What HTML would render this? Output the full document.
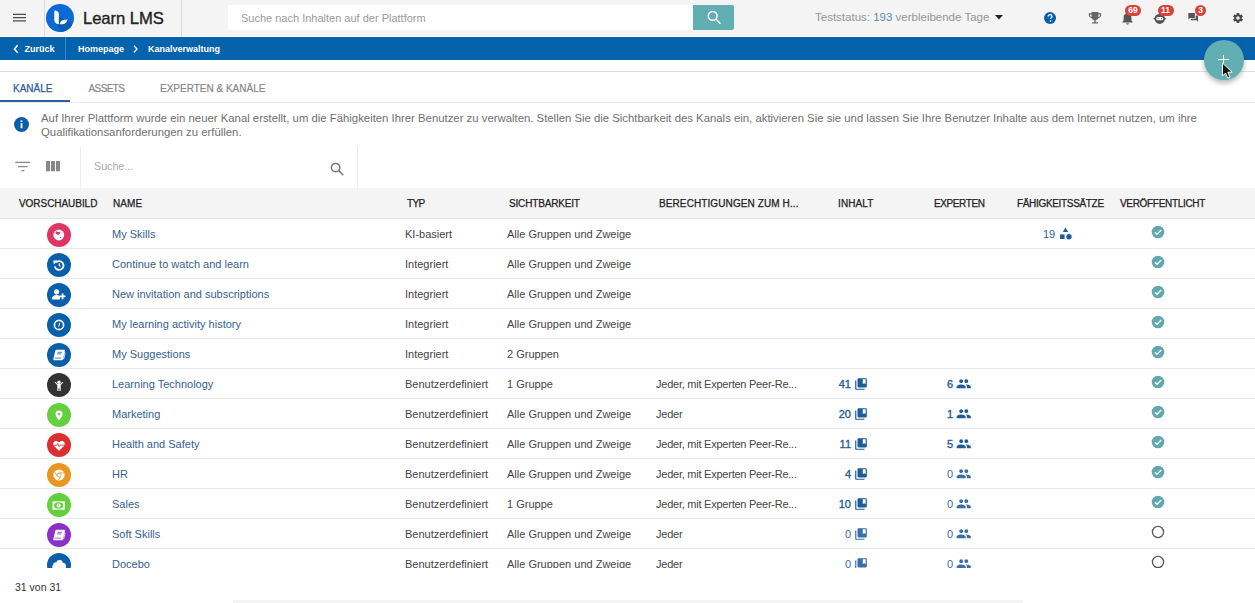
<!DOCTYPE html>
<html><head><meta charset="utf-8">
<style>
*{box-sizing:border-box;margin:0;padding:0}
html,body{width:1255px;height:603px;overflow:hidden;background:#fff;font-family:"Liberation Sans",sans-serif;position:relative}
.abs{position:absolute}
#hdr{position:absolute;left:0;top:0;width:1255px;height:36px;background:#f4f4f4}
#bc{position:absolute;left:0;top:37px;width:1255px;height:23px;background:#0563ad;color:#fff;font-weight:bold;font-size:9px}
.t{position:absolute;white-space:nowrap;line-height:1}
.hl{position:absolute;left:0;width:1255px;height:1px;background:#e6e6e6}
.th{position:absolute;top:199px;font-size:10px;font-weight:normal;color:#222;white-space:nowrap;line-height:1;letter-spacing:0.1px;-webkit-text-stroke:0.25px #222}
.row{position:absolute;left:0;width:1255px;height:30px;border-bottom:1px solid #e9e9e9}
.row .t{top:10.3px;font-size:11px;color:#444}
.row .nm{left:112px;color:#35628f}
.row .ty{left:405px}
.row .vi{left:507px}
.row .pe{left:656px;letter-spacing:-0.24px}
.row .num{top:10.3px;font-size:11px}
.row .b{-webkit-text-stroke:0.35px currentColor}
.badge{position:absolute;top:4.5px;height:11px;border-radius:6px;background:#d9413b;color:#fff;font-size:8.5px;font-weight:bold;text-align:center;line-height:11px}
.ic{position:absolute;left:46.5px;top:4px;width:24px;height:24px;border-radius:50%}
</style></head><body>
<div id="hdr">
  <svg class="abs" style="left:13px;top:12px" width="14" height="11" viewBox="0 0 14 11"><path d="M0 2.3h13M0 5.6h13M0 8.9h13" stroke="#4a4a4a" stroke-width="1.2"/></svg>
  <div class="abs" style="left:44px;top:0;width:1px;height:37px;background:#dcdcdc"></div>
  <div class="abs" style="left:181px;top:0;width:1px;height:37px;background:#dcdcdc"></div>
  <svg class="abs" style="left:45.5px;top:3.5px" width="28" height="28" viewBox="0 0 28 28"><defs><clipPath id="lc"><circle cx="14" cy="14" r="14"/></clipPath></defs><circle cx="14" cy="14" r="14" fill="#0b6ad5"/><path d="M10.5 20.3L12.8 12.5 21.6 16.3 34 28.7 22 40.7z" fill="#0a5db3" clip-path="url(#lc)"/><path d="M8.3 7.6c0-.8.5-1.2 1.3-1.1 1.9.3 3.2 1.7 3.2 3.7v10.1c-2.6-.2-4.5-1.9-4.5-4.4z" fill="#fff"/><path d="M13.6 20.3c.4-2.6 2.2-4.3 4.7-4.5l3.3-.3c-.4 2.7-2.3 4.5-4.8 4.7z" fill="#fff"/></svg>
  <div class="t" style="left:83px;top:10.5px;font-size:16.6px;color:#222;-webkit-text-stroke:0.35px #222;letter-spacing:-0.05px">Learn LMS</div>
  <div class="abs" style="left:228px;top:5px;width:465px;height:25px;background:#fff;border-radius:2px 0 0 2px"></div>
  <div class="t" style="left:241px;top:13px;font-size:11px;color:#9a9a9a">Suche nach Inhalten auf der Plattform</div>
  <div class="abs" style="left:693px;top:5px;width:41px;height:25px;background:#62afb3;border-radius:0 2px 2px 0"></div>
  <svg class="abs" style="left:704px;top:8px" width="20" height="20" viewBox="0 0 20 20"><circle cx="8.7" cy="7.9" r="4.4" stroke="#fff" stroke-width="1.5" fill="none"/><path d="M11.8 11l4.6 4.7" stroke="#fff" stroke-width="1.6"/></svg>
  <svg class="abs" style="left:995px;top:15px" width="8" height="5" viewBox="0 0 8 5"><path d="M0 0h8L4 4.5z" fill="#222"/></svg>
  <svg class="abs" style="left:1043.5px;top:11.5px" width="12" height="12" viewBox="0 0 12 12"><circle cx="6" cy="6" r="6" fill="#0b5ea8"/><path d="M4.2 4.6c0-1.1.8-1.9 1.9-1.9 1.1 0 1.9.7 1.9 1.7 0 1.3-1.5 1.4-1.5 2.6" stroke="#fff" stroke-width="1.3" fill="none"/><circle cx="6.5" cy="9.1" r=".8" fill="#fff"/></svg>
  <svg class="abs" style="left:1088px;top:12px" width="14" height="12" viewBox="0 0 14 12"><path d="M3.6 0h6.8v1.2h2.8v1.6c0 1.9-1.2 3.2-2.9 3.4-.6 1.2-1.6 1.9-2.6 2.1v1.9h2.4V11.6H4v-1.4h2.3V8.3C5.3 8.1 4.3 7.4 3.7 6.2 2 6 .8 4.7.8 2.8V1.2h2.8zM2 2.4v.5c0 1.1.6 1.9 1.6 2.1V2.4zm10 0h-1.6V5c1-.2 1.6-1 1.6-2.1z" fill="#666"/></svg>
  <svg class="abs" style="left:1121px;top:12px" width="13" height="13" viewBox="0 0 13 13"><path d="M6.5 12.5c.7 0 1.3-.6 1.3-1.3H5.2c0 .7.6 1.3 1.3 1.3zM10.4 8.6V5.4c0-2-1.1-3.6-2.9-4V.9C7.5.4 7 0 6.5 0S5.5.4 5.5.9v.5C3.6 1.8 2.6 3.4 2.6 5.4v3.2L1.3 9.9v.6h10.4v-.6z" fill="#555"/></svg>
  <svg class="abs" style="left:1153px;top:14.3px" width="13.5" height="10" viewBox="0 0 15 11"><path d="M7.5 0C4.4 0 2.2 1.9 1.8 4.2L0 5.2l1.8.9C2.2 8.8 4.4 11 7.5 11s5.3-2.2 5.7-4.9l1.8-.9-1.8-1C12.8 1.9 10.6 0 7.5 0z" fill="#555"/><rect x="3.6" y="3.3" width="7.8" height="3.6" rx="1.8" fill="#fff"/><circle cx="5.6" cy="5.1" r=".6" fill="#555"/><circle cx="9.4" cy="5.1" r=".6" fill="#555"/></svg>
  <svg class="abs" style="left:1187.5px;top:13px" width="10.5" height="9" viewBox="0 0 12 11"><path d="M0 0h8v6H2L0 8zM9 3h3v8l-2-2H3V7h6z" fill="#555"/></svg>
  <svg class="abs" style="left:1231.5px;top:11.5px" width="12" height="12" viewBox="0 0 24 24"><path d="M19.4 13c.04-.3.06-.6.06-1s-.02-.7-.06-1l2.1-1.65c.2-.15.24-.42.12-.64l-2-3.46c-.12-.22-.39-.3-.61-.22l-2.49 1c-.52-.4-1.08-.73-1.69-.98l-.38-2.65A.49.49 0 0 0 14 2h-4c-.25 0-.46.18-.49.42l-.38 2.65c-.61.25-1.17.59-1.69.98l-2.49-1a.5.5 0 0 0-.61.22l-2 3.46c-.13.22-.07.49.12.64L4.57 11c-.04.32-.07.65-.07 1s.03.68.07 1l-2.11 1.65c-.19.15-.24.42-.12.64l2 3.46c.12.22.39.3.61.22l2.49-1c.52.4 1.08.73 1.69.98l.38 2.65c.03.24.24.42.49.42h4c.25 0 .46-.18.49-.42l.38-2.65c.61-.25 1.17-.59 1.69-.98l2.49 1c.23.09.49 0 .61-.22l2-3.46c.12-.22.07-.49-.12-.64L19.4 13zM12 15.5c-1.93 0-3.5-1.57-3.5-3.5s1.57-3.5 3.5-3.5 3.5 1.57 3.5 3.5-1.57 3.5-3.5 3.5z" fill="#4a4a4a"/></svg>
  <div class="badge" style="left:1125px;width:16px">69</div>
  <div class="badge" style="left:1157.5px;width:16px">11</div>
  <div class="badge" style="left:1195px;width:11px">3</div>
  <div class="t" style="left:815px;top:12px;font-size:11.5px;color:#959595">Teststatus: <span style="color:#5f8bb0">193</span> verbleibende Tage</div>
</div>
<div id="bc">
  <svg class="abs" style="left:12px;top:7px" width="8" height="10" viewBox="0 0 8 10"><path d="M5.6 1.2L2.4 5l3.2 3.8" stroke="#fff" stroke-width="1.6" fill="none"/></svg>
  <div class="t" style="left:24.5px;top:8px">Zurück</div>
  <svg class="abs" style="left:132px;top:8px" width="7" height="8" viewBox="0 0 7 8"><path d="M2 .8L5 4 2 7.2" stroke="#fff" stroke-width="1.3" fill="none"/></svg>
  <div class="abs" style="left:65px;top:0;width:1px;height:23px;background:#3c86c4"></div>
  <div class="t" style="left:78px;top:8px">Homepage</div>
  <div class="t" style="left:148px;top:8px">Kanalverwaltung</div>
</div>
<div class="hl" style="top:71px;background:#dedede"></div>
<div class="t" style="left:13px;top:84px;font-size:10px;color:#2a5b96;-webkit-text-stroke:0.25px #2a5b96">KANÄLE</div>
<div class="t" style="left:88.5px;top:84px;font-size:10px;color:#888;letter-spacing:-0.6px;-webkit-text-stroke:0.2px #888">ASSETS</div>
<div class="t" style="left:160px;top:84px;font-size:10px;color:#888;-webkit-text-stroke:0.2px #888">EXPERTEN &amp; KANÄLE</div>
<div class="hl" style="top:102px;background:#ececec"></div>
<div class="abs" style="left:0;top:100px;width:70px;height:2px;background:#2b609e"></div>

<svg class="abs" style="left:13.5px;top:116.5px" width="15" height="15" viewBox="0 0 15 15"><circle cx="7.5" cy="7.5" r="7.5" fill="#0a5ea8"/><circle cx="7.5" cy="4.3" r="1" fill="#fff"/><rect x="6.6" y="6.2" width="1.8" height="5" fill="#fff"/></svg>
<div class="t" style="left:41px;top:111px;font-size:11.35px;color:#6f6f6f;line-height:14px">Auf Ihrer Plattform wurde ein neuer Kanal erstellt, um die Fähigkeiten Ihrer Benutzer zu verwalten. Stellen Sie die Sichtbarkeit des Kanals ein, aktivieren Sie sie und lassen Sie Ihre Benutzer Inhalte aus dem Internet nutzen, um ihre<br>Qualifikationsanforderungen zu erfüllen.</div>

<div class="abs" style="left:80px;top:147px;width:1px;height:41px;background:#ececec"></div>
<div class="abs" style="left:357px;top:147px;width:1px;height:41px;background:#ececec"></div>
<div class="t" style="left:94px;top:161px;font-size:10.7px;color:#aaa">Suche...</div>
<svg class="abs" style="left:15px;top:161px" width="16" height="12" viewBox="0 0 16 12"><path d="M0.3 1.4h14.7M3 5.6h9.5M6.2 9.7h3.2" stroke="#888" stroke-width="1.3"/></svg>
<svg class="abs" style="left:46px;top:161px" width="15" height="12" viewBox="0 0 15 12"><path d="M0 0h4v10.2H0zM5 0h4v10.2H5zM10 0h4v10.2h-4z" fill="#888"/></svg>
<svg class="abs" style="left:330px;top:162px" width="15" height="14" viewBox="0 0 15 14"><circle cx="5.6" cy="5.6" r="4.2" stroke="#777" stroke-width="1.5" fill="none"/><path d="M8.8 8.8l4.5 4.5" stroke="#777" stroke-width="1.6"/></svg>

<div class="abs" style="left:0;top:188px;width:1255px;height:31px;background:#f4f4f4;border-bottom:1px solid #e4e4e4"></div>
<div class="th" style="left:19px;letter-spacing:-0.05px">VORSCHAUBILD</div>
<div class="th" style="left:113px">NAME</div>
<div class="th" style="left:407px;letter-spacing:-0.7px">TYP</div>
<div class="th" style="left:509px;letter-spacing:-0.17px">SICHTBARKEIT</div>
<div class="th" style="left:659px">BERECHTIGUNGEN ZUM H...</div>
<div class="th" style="left:838px">INHALT</div>
<div class="th" style="left:934px;letter-spacing:-0.4px">EXPERTEN</div>
<div class="th" style="left:1017px;letter-spacing:-0.33px">FÄHIGKEITSSÄTZE</div>
<div class="th" style="left:1120px;letter-spacing:-0.32px">VERÖFFENTLICHT</div>

<div id="rows" class="abs" style="left:0;top:219px;width:1255px;height:349px;overflow:hidden">
<div class="row" style="top:0px"><div class="ic" style="background:#df3565"><svg width="24" height="24" viewBox="0 0 24 24"><circle cx="11.8" cy="12" r="5.4" fill="#fff"/><path d="M8.4 9.3c.4-.9 1.3-1.2 2-.9.5.3.7.9 1.2.6.6-.4 1.4-.3 1.7.3.3.6-.2 1.2-.8 1.5-.6.3-.8 1-1.3 1.4-.3.3-.7 0-.9-.4-.3-.5-.9-.8-1.4-1.2-.5-.4-.7-.8-.5-1.3zM13.2 13.9c.5-.2 1 .2.8.7-.2.4-.8.6-1.1.3-.2-.3 0-.8.3-1z" fill="#df3565"/></svg></div><div class="t nm">My Skills</div><div class="t ty">KI-basiert</div><div class="t vi">Alle Gruppen und Zweige</div><div class="t num" style="left:1043px;color:#2d5f94">19</div><svg class="abs" style="left:1059px;top:7px" width="14" height="14" viewBox="0 0 14 14"><path d="M6.5 1.4L9.2 6H3.8z" fill="#1f5c99"/><rect x="1" y="8.4" width="4.6" height="4.6" fill="#1f5c99"/><circle cx="10" cy="10.7" r="2.7" fill="#1f5c99"/></svg><svg class="abs" style="left:1151px;top:6px" width="14" height="14" viewBox="0 0 14 14"><circle cx="7" cy="7" r="6.3" fill="#62a9ad"/><path d="M3.9 7.2l2.1 2 4.2-4.2" stroke="#fff" stroke-width="1.4" fill="none"/></svg></div>
<div class="row" style="top:30px"><div class="ic" style="background:#0a5fa9"><svg width="24" height="24" viewBox="0 0 24 24"><path d="M9 9.3A4.4 4.4 0 1 1 7.8 13.4" stroke="#fff" stroke-width="1.8" fill="none"/><path d="M6.3 7.4h4.6L6.8 11.6z" fill="#fff"/><path d="M12.2 10.2v2.2l1.3 1" stroke="#fff" stroke-width="1.1" fill="none"/></svg></div><div class="t nm">Continue to watch and learn</div><div class="t ty">Integriert</div><div class="t vi">Alle Gruppen und Zweige</div><svg class="abs" style="left:1151px;top:6px" width="14" height="14" viewBox="0 0 14 14"><circle cx="7" cy="7" r="6.3" fill="#62a9ad"/><path d="M3.9 7.2l2.1 2 4.2-4.2" stroke="#fff" stroke-width="1.4" fill="none"/></svg></div>
<div class="row" style="top:60px"><div class="ic" style="background:#0a5fa9"><svg width="24" height="24" viewBox="0 0 24 24"><circle cx="9.6" cy="8.8" r="2.6" fill="#fff"/><path d="M4.8 16.4c-.3-2.7 2-4.5 4.8-4.5 1.4 0 2.6.4 3.4 1.1v3.4z" fill="#fff"/><path d="M15.6 10.6v5.6M12.8 13.4h5.6" stroke="#fff" stroke-width="1.7"/></svg></div><div class="t nm">New invitation and subscriptions</div><div class="t ty">Integriert</div><div class="t vi">Alle Gruppen und Zweige</div><svg class="abs" style="left:1151px;top:6px" width="14" height="14" viewBox="0 0 14 14"><circle cx="7" cy="7" r="6.3" fill="#62a9ad"/><path d="M3.9 7.2l2.1 2 4.2-4.2" stroke="#fff" stroke-width="1.4" fill="none"/></svg></div>
<div class="row" style="top:90px"><div class="ic" style="background:#0a5fa9"><svg width="24" height="24" viewBox="0 0 24 24"><circle cx="12" cy="12" r="4.6" stroke="#fff" stroke-width="1.7" fill="none"/><path d="M12.4 9.9v2.5l-1.4 1" stroke="#fff" stroke-width="1" fill="none"/></svg></div><div class="t nm">My learning activity history</div><div class="t ty">Integriert</div><div class="t vi">Alle Gruppen und Zweige</div><svg class="abs" style="left:1151px;top:6px" width="14" height="14" viewBox="0 0 14 14"><circle cx="7" cy="7" r="6.3" fill="#62a9ad"/><path d="M3.9 7.2l2.1 2 4.2-4.2" stroke="#fff" stroke-width="1.4" fill="none"/></svg></div>
<div class="row" style="top:120px"><div class="ic" style="background:#0a5fa9"><svg width="24" height="24" viewBox="0 0 24 24"><path d="M10 6.8h7.2c.5 0 .8.4.7.9l-1.9 8.6c-.2.6-.6 1-1.2 1H7.2c-.6 0-1-.5-.9-1.1l1.9-8.1c.2-.8.9-1.3 1.8-1.3z" fill="#fff"/><path d="M10.6 9.3h4.3M10.2 10.9h4.1" stroke="#0a5fa9" stroke-width="0.8"/><path d="M7.6 15.1h6.6" stroke="#0a5fa9" stroke-width="0.7"/><path d="M17.2 9.5l.9.4-1.5 6.4" stroke="#fff" stroke-width="0.8" fill="none"/></svg></div><div class="t nm">My Suggestions</div><div class="t ty">Integriert</div><div class="t vi">2 Gruppen</div><svg class="abs" style="left:1151px;top:6px" width="14" height="14" viewBox="0 0 14 14"><circle cx="7" cy="7" r="6.3" fill="#62a9ad"/><path d="M3.9 7.2l2.1 2 4.2-4.2" stroke="#fff" stroke-width="1.4" fill="none"/></svg></div>
<div class="row" style="top:150px"><div class="ic" style="background:#333333"><svg width="24" height="24" viewBox="0 0 24 24"><circle cx="12" cy="9.2" r="1.7" fill="#fff"/><path d="M7.6 9.4l.8-.7 2.3 2.3h2.6l2.3-2.3.8.7-2.7 2.7v5.9h-1.2v-2.8h-1v2.8h-1.2v-5.9z" fill="#fff"/></svg></div><div class="t nm">Learning Technology</div><div class="t ty">Benutzerdefiniert</div><div class="t vi">1 Gruppe</div><div class="t pe">Jeder, mit Experten Peer-Re...</div><div class="t num b" style="right:404px;color:#1f5c99">41</div><div class="abs" style="left:854px;top:7.5px"><svg class="lib" width="14" height="14" viewBox="0 0 24 24"><path d="M4 6H2v14c0 1.1.9 2 2 2h14v-2H4V6zm16-4H8c-1.1 0-2 .9-2 2v12c0 1.1.9 2 2 2h12c1.1 0 2-.9 2-2V4c0-1.1-.9-2-2-2zm0 10l-2.5-1.5L15 12V4h5v8z" fill="#1f5c99"/></svg></div><div class="t num b" style="right:302px;color:#1f5c99">6</div><div class="abs" style="left:956px;top:7px"><svg class="ppl" width="15.5" height="15.5" viewBox="0 0 24 24"><path d="M16 11c1.66 0 2.99-1.34 2.99-3S17.66 5 16 5c-1.66 0-3 1.34-3 3s1.34 3 3 3zm-8 0c1.66 0 2.99-1.34 2.99-3S9.66 5 8 5C6.34 5 5 6.34 5 8s1.34 3 3 3zm0 2c-2.33 0-7 1.17-7 3.5V19h14v-2.5c0-2.33-4.67-3.5-7-3.5zm8 0c-.29 0-.62.02-.97.05 1.16.84 1.97 1.97 1.97 3.45V19h6v-2.5c0-2.33-4.67-3.5-7-3.5z" fill="#1f5c99"/></svg></div><svg class="abs" style="left:1151px;top:6px" width="14" height="14" viewBox="0 0 14 14"><circle cx="7" cy="7" r="6.3" fill="#62a9ad"/><path d="M3.9 7.2l2.1 2 4.2-4.2" stroke="#fff" stroke-width="1.4" fill="none"/></svg></div>
<div class="row" style="top:180px"><div class="ic" style="background:#65cf3f"><svg width="24" height="24" viewBox="0 0 24 24"><path d="M12 7.6a3.5 3.5 0 0 1 3.5 3.5c0 2.4-3.5 6.5-3.5 6.5s-3.5-4.1-3.5-6.5A3.5 3.5 0 0 1 12 7.6z" fill="#fff"/><circle cx="12" cy="11" r="1.2" fill="#65cf3f"/></svg></div><div class="t nm">Marketing</div><div class="t ty">Benutzerdefiniert</div><div class="t vi">Alle Gruppen und Zweige</div><div class="t pe">Jeder</div><div class="t num b" style="right:404px;color:#1f5c99">20</div><div class="abs" style="left:854px;top:7.5px"><svg class="lib" width="14" height="14" viewBox="0 0 24 24"><path d="M4 6H2v14c0 1.1.9 2 2 2h14v-2H4V6zm16-4H8c-1.1 0-2 .9-2 2v12c0 1.1.9 2 2 2h12c1.1 0 2-.9 2-2V4c0-1.1-.9-2-2-2zm0 10l-2.5-1.5L15 12V4h5v8z" fill="#1f5c99"/></svg></div><div class="t num b" style="right:302px;color:#1f5c99">1</div><div class="abs" style="left:956px;top:7px"><svg class="ppl" width="15.5" height="15.5" viewBox="0 0 24 24"><path d="M16 11c1.66 0 2.99-1.34 2.99-3S17.66 5 16 5c-1.66 0-3 1.34-3 3s1.34 3 3 3zm-8 0c1.66 0 2.99-1.34 2.99-3S9.66 5 8 5C6.34 5 5 6.34 5 8s1.34 3 3 3zm0 2c-2.33 0-7 1.17-7 3.5V19h14v-2.5c0-2.33-4.67-3.5-7-3.5zm8 0c-.29 0-.62.02-.97.05 1.16.84 1.97 1.97 1.97 3.45V19h6v-2.5c0-2.33-4.67-3.5-7-3.5z" fill="#1f5c99"/></svg></div><svg class="abs" style="left:1151px;top:6px" width="14" height="14" viewBox="0 0 14 14"><circle cx="7" cy="7" r="6.3" fill="#62a9ad"/><path d="M3.9 7.2l2.1 2 4.2-4.2" stroke="#fff" stroke-width="1.4" fill="none"/></svg></div>
<div class="row" style="top:210px"><div class="ic" style="background:#dc2f2f"><svg width="24" height="24" viewBox="0 0 24 24"><path d="M12 17.8l-4.5-4.4c-1.8-1.8-1.6-4 0-4.9 1.5-.9 3.4-.3 4.5 1.1 1.1-1.4 3-2 4.5-1.1 1.6.9 1.8 3.1 0 4.9z" fill="#fff"/><path d="M7 12.3h2.7l1-1.7 1.4 3 1-1.5h3.8" stroke="#dc2f2f" stroke-width="0.85" fill="none"/></svg></div><div class="t nm">Health and Safety</div><div class="t ty">Benutzerdefiniert</div><div class="t vi">Alle Gruppen und Zweige</div><div class="t pe">Jeder, mit Experten Peer-Re...</div><div class="t num b" style="right:404px;color:#1f5c99">11</div><div class="abs" style="left:854px;top:7.5px"><svg class="lib" width="14" height="14" viewBox="0 0 24 24"><path d="M4 6H2v14c0 1.1.9 2 2 2h14v-2H4V6zm16-4H8c-1.1 0-2 .9-2 2v12c0 1.1.9 2 2 2h12c1.1 0 2-.9 2-2V4c0-1.1-.9-2-2-2zm0 10l-2.5-1.5L15 12V4h5v8z" fill="#1f5c99"/></svg></div><div class="t num b" style="right:302px;color:#1f5c99">5</div><div class="abs" style="left:956px;top:7px"><svg class="ppl" width="15.5" height="15.5" viewBox="0 0 24 24"><path d="M16 11c1.66 0 2.99-1.34 2.99-3S17.66 5 16 5c-1.66 0-3 1.34-3 3s1.34 3 3 3zm-8 0c1.66 0 2.99-1.34 2.99-3S9.66 5 8 5C6.34 5 5 6.34 5 8s1.34 3 3 3zm0 2c-2.33 0-7 1.17-7 3.5V19h14v-2.5c0-2.33-4.67-3.5-7-3.5zm8 0c-.29 0-.62.02-.97.05 1.16.84 1.97 1.97 1.97 3.45V19h6v-2.5c0-2.33-4.67-3.5-7-3.5z" fill="#1f5c99"/></svg></div><svg class="abs" style="left:1151px;top:6px" width="14" height="14" viewBox="0 0 14 14"><circle cx="7" cy="7" r="6.3" fill="#62a9ad"/><path d="M3.9 7.2l2.1 2 4.2-4.2" stroke="#fff" stroke-width="1.4" fill="none"/></svg></div>
<div class="row" style="top:240px"><div class="ic" style="background:#e8961f"><svg width="24" height="24" viewBox="0 0 24 24"><circle cx="12" cy="12" r="5.6" fill="#fff"/><circle cx="12" cy="12" r="2.1" stroke="#e8961f" stroke-width="0.8" fill="none"/><path d="M12 9.9h5.2M10.2 13l-2.6-4.4M13.8 13l-2.6 4.5" stroke="#e8961f" stroke-width="0.8"/></svg></div><div class="t nm">HR</div><div class="t ty">Benutzerdefiniert</div><div class="t vi">Alle Gruppen und Zweige</div><div class="t pe">Jeder, mit Experten Peer-Re...</div><div class="t num b" style="right:404px;color:#1f5c99">4</div><div class="abs" style="left:854px;top:7.5px"><svg class="lib" width="14" height="14" viewBox="0 0 24 24"><path d="M4 6H2v14c0 1.1.9 2 2 2h14v-2H4V6zm16-4H8c-1.1 0-2 .9-2 2v12c0 1.1.9 2 2 2h12c1.1 0 2-.9 2-2V4c0-1.1-.9-2-2-2zm0 10l-2.5-1.5L15 12V4h5v8z" fill="#1f5c99"/></svg></div><div class="t num" style="right:302px;color:#3b6ea6">0</div><div class="abs" style="left:956px;top:7px"><svg class="ppl" width="15.5" height="15.5" viewBox="0 0 24 24"><path d="M16 11c1.66 0 2.99-1.34 2.99-3S17.66 5 16 5c-1.66 0-3 1.34-3 3s1.34 3 3 3zm-8 0c1.66 0 2.99-1.34 2.99-3S9.66 5 8 5C6.34 5 5 6.34 5 8s1.34 3 3 3zm0 2c-2.33 0-7 1.17-7 3.5V19h14v-2.5c0-2.33-4.67-3.5-7-3.5zm8 0c-.29 0-.62.02-.97.05 1.16.84 1.97 1.97 1.97 3.45V19h6v-2.5c0-2.33-4.67-3.5-7-3.5z" fill="#3b6ea6"/></svg></div><svg class="abs" style="left:1151px;top:6px" width="14" height="14" viewBox="0 0 14 14"><circle cx="7" cy="7" r="6.3" fill="#62a9ad"/><path d="M3.9 7.2l2.1 2 4.2-4.2" stroke="#fff" stroke-width="1.4" fill="none"/></svg></div>
<div class="row" style="top:270px"><div class="ic" style="background:#65cf3f"><svg width="24" height="24" viewBox="0 0 24 24"><rect x="5.5" y="8.4" width="12.4" height="8.3" fill="#fff"/><ellipse cx="11.7" cy="12.55" rx="4.6" ry="3.3" fill="#65cf3f"/><circle cx="11.7" cy="12.55" r="2.1" fill="#fff"/><path d="M11.7 11.3v2.5" stroke="#65cf3f" stroke-width="0.6"/></svg></div><div class="t nm">Sales</div><div class="t ty">Benutzerdefiniert</div><div class="t vi">1 Gruppe</div><div class="t pe">Jeder, mit Experten Peer-Re...</div><div class="t num b" style="right:404px;color:#1f5c99">10</div><div class="abs" style="left:854px;top:7.5px"><svg class="lib" width="14" height="14" viewBox="0 0 24 24"><path d="M4 6H2v14c0 1.1.9 2 2 2h14v-2H4V6zm16-4H8c-1.1 0-2 .9-2 2v12c0 1.1.9 2 2 2h12c1.1 0 2-.9 2-2V4c0-1.1-.9-2-2-2zm0 10l-2.5-1.5L15 12V4h5v8z" fill="#1f5c99"/></svg></div><div class="t num" style="right:302px;color:#3b6ea6">0</div><div class="abs" style="left:956px;top:7px"><svg class="ppl" width="15.5" height="15.5" viewBox="0 0 24 24"><path d="M16 11c1.66 0 2.99-1.34 2.99-3S17.66 5 16 5c-1.66 0-3 1.34-3 3s1.34 3 3 3zm-8 0c1.66 0 2.99-1.34 2.99-3S9.66 5 8 5C6.34 5 5 6.34 5 8s1.34 3 3 3zm0 2c-2.33 0-7 1.17-7 3.5V19h14v-2.5c0-2.33-4.67-3.5-7-3.5zm8 0c-.29 0-.62.02-.97.05 1.16.84 1.97 1.97 1.97 3.45V19h6v-2.5c0-2.33-4.67-3.5-7-3.5z" fill="#3b6ea6"/></svg></div><svg class="abs" style="left:1151px;top:6px" width="14" height="14" viewBox="0 0 14 14"><circle cx="7" cy="7" r="6.3" fill="#62a9ad"/><path d="M3.9 7.2l2.1 2 4.2-4.2" stroke="#fff" stroke-width="1.4" fill="none"/></svg></div>
<div class="row" style="top:300px"><div class="ic" style="background:#8a2fc8"><svg width="24" height="24" viewBox="0 0 24 24"><path d="M10 6.8h7.2c.5 0 .8.4.7.9l-1.9 8.6c-.2.6-.6 1-1.2 1H7.2c-.6 0-1-.5-.9-1.1l1.9-8.1c.2-.8.9-1.3 1.8-1.3z" fill="#fff"/><path d="M10.6 9.3h4.3M10.2 10.9h4.1" stroke="#8a2fc8" stroke-width="0.8"/><path d="M7.6 15.1h6.6" stroke="#8a2fc8" stroke-width="0.7"/><path d="M17.2 9.5l.9.4-1.5 6.4" stroke="#fff" stroke-width="0.8" fill="none"/></svg></div><div class="t nm">Soft Skills</div><div class="t ty">Benutzerdefiniert</div><div class="t vi">Alle Gruppen und Zweige</div><div class="t pe">Jeder</div><div class="t num" style="right:404px;color:#3b6ea6">0</div><div class="abs" style="left:854px;top:7.5px"><svg class="lib" width="14" height="14" viewBox="0 0 24 24"><path d="M4 6H2v14c0 1.1.9 2 2 2h14v-2H4V6zm16-4H8c-1.1 0-2 .9-2 2v12c0 1.1.9 2 2 2h12c1.1 0 2-.9 2-2V4c0-1.1-.9-2-2-2zm0 10l-2.5-1.5L15 12V4h5v8z" fill="#3b6ea6"/></svg></div><div class="t num" style="right:302px;color:#3b6ea6">0</div><div class="abs" style="left:956px;top:7px"><svg class="ppl" width="15.5" height="15.5" viewBox="0 0 24 24"><path d="M16 11c1.66 0 2.99-1.34 2.99-3S17.66 5 16 5c-1.66 0-3 1.34-3 3s1.34 3 3 3zm-8 0c1.66 0 2.99-1.34 2.99-3S9.66 5 8 5C6.34 5 5 6.34 5 8s1.34 3 3 3zm0 2c-2.33 0-7 1.17-7 3.5V19h14v-2.5c0-2.33-4.67-3.5-7-3.5zm8 0c-.29 0-.62.02-.97.05 1.16.84 1.97 1.97 1.97 3.45V19h6v-2.5c0-2.33-4.67-3.5-7-3.5z" fill="#3b6ea6"/></svg></div><svg class="abs" style="left:1151px;top:6px" width="14" height="14" viewBox="0 0 14 14"><circle cx="7" cy="7" r="5.6" stroke="#555" stroke-width="1.3" fill="none"/></svg></div>
<div class="row" style="top:330px"><div class="ic" style="background:#0a5fa9"><svg width="24" height="24" viewBox="0 0 24 24"><circle cx="9.3" cy="12.5" r="3.2" fill="#fff"/><circle cx="12.6" cy="10.2" r="3.2" fill="#fff"/><circle cx="16" cy="12.6" r="2.8" fill="#fff"/><rect x="5.3" y="12.5" width="13.7" height="12" fill="#fff"/></svg></div><div class="t nm">Docebo</div><div class="t ty">Benutzerdefiniert</div><div class="t vi">Alle Gruppen und Zweige</div><div class="t pe">Jeder</div><div class="t num" style="right:404px;color:#3b6ea6">0</div><div class="abs" style="left:854px;top:7.5px"><svg class="lib" width="14" height="14" viewBox="0 0 24 24"><path d="M4 6H2v14c0 1.1.9 2 2 2h14v-2H4V6zm16-4H8c-1.1 0-2 .9-2 2v12c0 1.1.9 2 2 2h12c1.1 0 2-.9 2-2V4c0-1.1-.9-2-2-2zm0 10l-2.5-1.5L15 12V4h5v8z" fill="#3b6ea6"/></svg></div><div class="t num" style="right:302px;color:#3b6ea6">0</div><div class="abs" style="left:956px;top:7px"><svg class="ppl" width="15.5" height="15.5" viewBox="0 0 24 24"><path d="M16 11c1.66 0 2.99-1.34 2.99-3S17.66 5 16 5c-1.66 0-3 1.34-3 3s1.34 3 3 3zm-8 0c1.66 0 2.99-1.34 2.99-3S9.66 5 8 5C6.34 5 5 6.34 5 8s1.34 3 3 3zm0 2c-2.33 0-7 1.17-7 3.5V19h14v-2.5c0-2.33-4.67-3.5-7-3.5zm8 0c-.29 0-.62.02-.97.05 1.16.84 1.97 1.97 1.97 3.45V19h6v-2.5c0-2.33-4.67-3.5-7-3.5z" fill="#3b6ea6"/></svg></div><svg class="abs" style="left:1151px;top:6px" width="14" height="14" viewBox="0 0 14 14"><circle cx="7" cy="7" r="5.6" stroke="#555" stroke-width="1.3" fill="none"/></svg></div>
</div>
<div class="t" style="left:15px;top:582px;font-size:10.5px;color:#333">31 von 31</div>
<div class="abs" style="left:233px;top:600px;width:790px;height:3px;background:#f3f3f3;border-radius:2px 2px 0 0"></div>
<div class="abs" style="left:1204px;top:40px;width:40px;height:40px;border-radius:50%;background:#62afb3;box-shadow:0 3px 5px rgba(0,0,0,.28)"></div>
<div class="abs" style="left:1218px;top:59.4px;width:11px;height:1.1px;background:#fff"></div>
<div class="abs" style="left:1222.6px;top:54.5px;width:1.1px;height:10px;background:#fff"></div>
<svg class="abs" style="left:1221px;top:62px" width="14" height="18" viewBox="0 0 14 18"><path d="M1.5 1v13l3-3 2.3 5.2 2.2-1-2.2-5h4.4z" fill="#111" stroke="#fff" stroke-width="1"/></svg>
</body></html>
